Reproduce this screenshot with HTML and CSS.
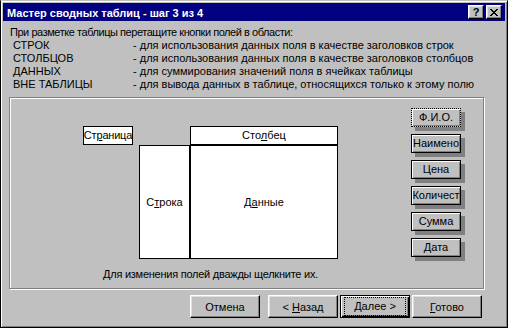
FILE: index.html
```html
<!DOCTYPE html>
<html lang="ru">
<head>
    <meta charset="UTF-8">
    <title>Мастер сводных таблиц - шаг 3 из 4</title>
    <link rel="stylesheet" href="styles.css">
</head>
<body>
    <div class="window">
        <div class="titlebar">
            <span class="title">Мастер сводных таблиц - шаг 3 из 4</span>
            <div class="title-buttons">
                <button class="title-btn help">?</button>
                <button class="title-btn close">
                    <svg width="8" height="7" viewBox="0 0 8 7" shape-rendering="crispEdges">
                        <path d="M0 0h2v1h-2zM6 0h2v1h-2zM1 1h2v1h-2zM5 1h2v1h-2zM2 2h4v1h-4zM3 3h2v1h-2zM2 4h4v1h-4zM1 5h2v1h-2zM5 5h2v1h-2zM0 6h2v1h-2zM6 6h2v1h-2z" fill="#000"/>
                    </svg>
                </button>
            </div>
        </div>

        <div class="content">
            <p class="intro">При разметке таблицы перетащите кнопки полей в области:</p>
            <dl class="legend">
                <dt>СТРОК</dt>
                <dd>- для использования данных поля в качестве заголовков строк</dd>
                <dt>СТОЛБЦОВ</dt>
                <dd>- для использования данных поля в качестве заголовков столбцов</dd>
                <dt>ДАННЫХ</dt>
                <dd>- для суммирования значений поля в ячейках таблицы</dd>
                <dt>ВНЕ ТАБЛИЦЫ</dt>
                <dd>- для вывода данных в таблице, относящихся только к этому полю</dd>
            </dl>

            <div class="frame">
                <div class="layout">
                    <div class="diagram">
                        <div class="area page"><span>Ст<u>р</u>аница</span></div>
                        <div class="area column"><span>Сто<u>л</u>бец</span></div>
                        <div class="area row"><span>С<u>т</u>рока</span></div>
                        <div class="area data"><span>Д<u>а</u>нные</span></div>
                    </div>
                    <p class="hint">Для изменения полей дважды щелкните их.</p>
                </div>
                <div class="fields">
                    <div class="field focused">Ф.И.О.</div>
                    <div class="field">Наимено</div>
                    <div class="field">Цена</div>
                    <div class="field">Количест</div>
                    <div class="field">Сумма</div>
                    <div class="field">Дата</div>
                </div>
            </div>

            <div class="actions">
                <button class="btn cancel"><span>Отмена</span></button>
                <button class="btn back"><span>&lt; <u>Н</u>азад</span></button>
                <button class="btn default"><span class="focus"><span><u>Д</u>алее &gt;</span></span></button>
                <button class="btn"><span><u>Г</u>отово</span></button>
            </div>
        </div>
    </div>
</body>
</html>
```

FILE: styles.css
```css
body {
    margin: 0;
    font-family: "Liberation Sans", Arial, sans-serif;
    font-size: 11px;
    line-height: 13px;
    color: #000000;
    background-color: #c0c0c0;
}

.window {
    width: 508px;
    height: 328px;
    box-sizing: border-box;
    padding: 2px;
    background-color: #c0c0c0;
    border: 1px solid;
    border-color: #c0c0c0 #000000 #000000 #000000;
    box-shadow: inset 1px 1px #ffffff, inset -1px -1px #808080;
}

.titlebar {
    height: 18px;
    display: flex;
    justify-content: space-between;
    align-items: flex-start;
    padding: 0 3px 0 4px;
    background-color: #000080;
}

.title {
    color: #ffffff;
    font-weight: bold;
    line-height: 18px;
    padding-top: 1px;
}

.title-buttons {
    display: flex;
    gap: 2px;
    padding-top: 2px;
}

.title-btn {
    width: 16px;
    height: 14px;
    box-sizing: border-box;
    padding: 0;
    display: flex;
    justify-content: center;
    align-items: center;
    font-family: "Liberation Sans", Arial, sans-serif;
    font-size: 11px;
    font-weight: bold;
    line-height: 12px;
    color: #000000;
    background-color: #c0c0c0;
    border: 1px solid;
    border-color: #ffffff #000000 #000000 #ffffff;
    box-shadow: inset -1px -1px #808080, inset 1px 1px #dfdfdf;
}

.close svg {
    display: block;
}

.content {
    padding: 5px 21px 0 6px;
}

.intro {
    margin: 0;
    padding-left: 1px;
    letter-spacing: -0.45px;
}

.legend {
    display: grid;
    grid-template-columns: 120px 1fr;
    margin: 0;
    padding-left: 4px;
}

.legend dt,
.legend dd {
    margin: 0;
    white-space: nowrap;
}

/* etched group box */
.frame {
    height: 192px;
    box-sizing: border-box;
    margin-top: 6px;
    padding: 10px 0 0 73px;
    display: flex;
    align-items: flex-start;
    border: 1px solid #808080;
    box-shadow: inset 1px 1px #ffffff, 1px 1px #ffffff;
}

.layout {
    margin-top: 18px;
    width: 255px;
}

.diagram {
    display: grid;
    grid-template-columns: 50px 6px 51px 148px;
    grid-template-rows: 19px 114px;
}

.area {
    display: flex;
    justify-content: center;
    align-items: center;
    white-space: nowrap;
    overflow: hidden;
    background-color: #ffffff;
    border: 1px solid #000000;
}

.page {
    grid-column: 1;
    grid-row: 1;
    letter-spacing: -0.2px;
}

.column {
    grid-column: 4;
    grid-row: 1;
}

.row {
    grid-column: 3;
    grid-row: 2;
}

.data {
    grid-column: 4;
    grid-row: 2;
}

.hint {
    margin: 9px 0 0;
    text-align: center;
    white-space: nowrap;
    letter-spacing: -0.25px;
}

.fields {
    margin-left: 73px;
    display: flex;
    flex-direction: column;
    gap: 7px;
}

.field {
    width: 50px;
    height: 19px;
    box-sizing: border-box;
    display: flex;
    justify-content: center;
    align-items: center;
    overflow: hidden;
    white-space: nowrap;
    background-color: #c0c0c0;
    border: 1px solid #000000;
    box-shadow: inset 1px 1px #ffffff, inset -1px -1px #808080, 4px 4px 0 #808080;
}

.field.focused {
    border-style: dotted;
}

.actions {
    display: flex;
    justify-content: flex-end;
    margin-top: 6px;
    padding-right: 2px;
}

.btn {
    width: 70px;
    height: 23px;
    box-sizing: border-box;
    padding: 0;
    display: flex;
    justify-content: center;
    align-items: center;
    font-family: "Liberation Sans", Arial, sans-serif;
    font-size: 11px;
    color: #000000;
    background-color: #c0c0c0;
    border: 1px solid;
    border-color: #ffffff #000000 #000000 #ffffff;
    box-shadow: inset -1px -1px #808080, inset 1px 1px #dfdfdf;
}

.cancel {
    margin-right: 8px;
}

.back,
.default {
    margin-right: 2px;
}

.btn.default {
    border-color: #000000;
    box-shadow: inset 1px 1px #ffffff, inset -1px -1px #000000, inset -2px -2px #808080;
}

.focus {
    flex: 1;
    height: 17px;
    margin: 0 3px 1px;
    display: flex;
    justify-content: center;
    align-items: center;
    border: 1px dotted #000000;
}
```
